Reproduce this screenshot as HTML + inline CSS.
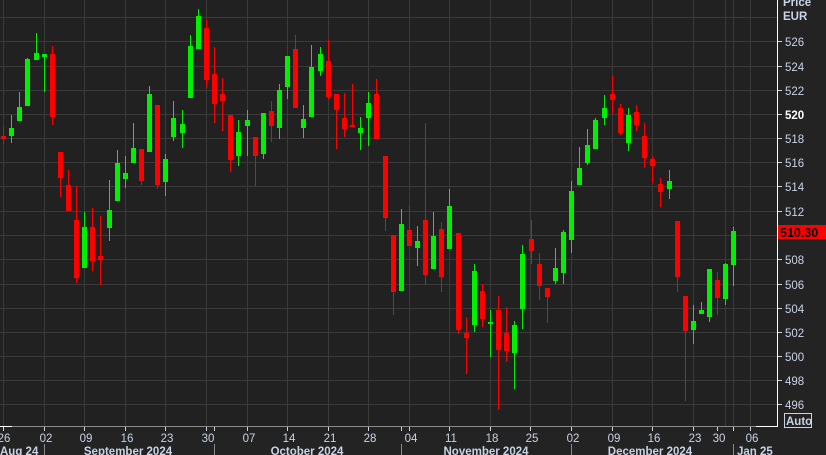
<!DOCTYPE html>
<html><head><meta charset="utf-8"><style>
html,body{margin:0;padding:0;background:#232323;width:826px;height:455px;overflow:hidden}
svg{display:block}
text{font-family:"Liberation Sans",sans-serif;fill:#c9d3e6}
.r{fill:#ff0000}.g{fill:#00f000}
</style></head><body>
<svg width="826" height="455" xmlns="http://www.w3.org/2000/svg">
<rect x="0" y="0" width="826" height="455" fill="#232323"/>
<rect x="0" y="0" width="777" height="426" fill="#212121"/>
<g stroke="#3a3a3a" stroke-width="1">
<line x1="0" y1="17.5" x2="777" y2="17.5"/><line x1="0" y1="41.5" x2="777" y2="41.5"/><line x1="0" y1="66.5" x2="777" y2="66.5"/><line x1="0" y1="90.5" x2="777" y2="90.5"/><line x1="0" y1="114.5" x2="777" y2="114.5"/><line x1="0" y1="138.5" x2="777" y2="138.5"/><line x1="0" y1="162.5" x2="777" y2="162.5"/><line x1="0" y1="186.5" x2="777" y2="186.5"/><line x1="0" y1="211.5" x2="777" y2="211.5"/><line x1="0" y1="235.5" x2="777" y2="235.5"/><line x1="0" y1="259.5" x2="777" y2="259.5"/><line x1="0" y1="284.5" x2="777" y2="284.5"/><line x1="0" y1="308.5" x2="777" y2="308.5"/><line x1="0" y1="332.5" x2="777" y2="332.5"/><line x1="0" y1="356.5" x2="777" y2="356.5"/><line x1="0" y1="380.5" x2="777" y2="380.5"/><line x1="0" y1="404.5" x2="777" y2="404.5"/>
<line x1="3.5" y1="0" x2="3.5" y2="426"/><line x1="44.5" y1="0" x2="44.5" y2="426"/><line x1="84.5" y1="0" x2="84.5" y2="426"/><line x1="125.5" y1="0" x2="125.5" y2="426"/><line x1="165.5" y1="0" x2="165.5" y2="426"/><line x1="206.5" y1="0" x2="206.5" y2="426"/><line x1="247.5" y1="0" x2="247.5" y2="426"/><line x1="287.5" y1="0" x2="287.5" y2="426"/><line x1="328.5" y1="0" x2="328.5" y2="426"/><line x1="368.5" y1="0" x2="368.5" y2="426"/><line x1="409.5" y1="0" x2="409.5" y2="426"/><line x1="449.5" y1="0" x2="449.5" y2="426"/><line x1="490.5" y1="0" x2="490.5" y2="426"/><line x1="530.5" y1="0" x2="530.5" y2="426"/><line x1="571.5" y1="0" x2="571.5" y2="426"/><line x1="612.5" y1="0" x2="612.5" y2="426"/><line x1="652.5" y1="0" x2="652.5" y2="426"/><line x1="693.5" y1="0" x2="693.5" y2="426"/><line x1="725.5" y1="0" x2="725.5" y2="426"/><line x1="733.5" y1="0" x2="733.5" y2="426"/><line x1="750.5" y1="0" x2="750.5" y2="426"/>
</g>
<g class="r"><rect x="3" y="127" width="1" height="17"/><rect x="1" y="136" width="5" height="3"/></g>
<g class="g"><rect x="11" y="115" width="1" height="28"/><rect x="9" y="128" width="5" height="8"/></g>
<g class="g"><rect x="19" y="92" width="1" height="29"/><rect x="17" y="107" width="5" height="14"/></g>
<g class="g"><rect x="27" y="58" width="1" height="48"/><rect x="25" y="59" width="5" height="47"/></g>
<g class="g"><rect x="36" y="33" width="1" height="27"/><rect x="34" y="53" width="5" height="7"/></g>
<g class="g"><rect x="44" y="54" width="1" height="38"/><rect x="42" y="54" width="5" height="3"/></g>
<g class="r"><rect x="52" y="46" width="1" height="79"/><rect x="50" y="54" width="5" height="63"/></g>
<g class="r"><rect x="60" y="152" width="1" height="45"/><rect x="58" y="152" width="5" height="26"/></g>
<g class="r"><rect x="68" y="170" width="1" height="41"/><rect x="66" y="185" width="5" height="26"/></g>
<g class="r"><rect x="76" y="186" width="1" height="97"/><rect x="74" y="220" width="5" height="58"/></g>
<g class="g"><rect x="84" y="212" width="1" height="56"/><rect x="82" y="227" width="5" height="41"/></g>
<g class="r"><rect x="92" y="208" width="1" height="63"/><rect x="90" y="227" width="5" height="34"/></g>
<g class="r"><rect x="100" y="216" width="1" height="69"/><rect x="98" y="256" width="5" height="4"/></g>
<g class="g"><rect x="109" y="180" width="1" height="61"/><rect x="107" y="210" width="5" height="18"/></g>
<g class="g"><rect x="117" y="150" width="1" height="51"/><rect x="115" y="163" width="5" height="38"/></g>
<g class="g"><rect x="125" y="156" width="1" height="32"/><rect x="123" y="173" width="5" height="6"/></g>
<g class="g"><rect x="133" y="123" width="1" height="40"/><rect x="131" y="148" width="5" height="15"/></g>
<g class="r"><rect x="141" y="149" width="1" height="36"/><rect x="139" y="149" width="5" height="32"/></g>
<g class="g"><rect x="149" y="86" width="1" height="66"/><rect x="147" y="94" width="5" height="58"/></g>
<g class="r"><rect x="157" y="105" width="1" height="84"/><rect x="155" y="105" width="5" height="80"/></g>
<g class="g"><rect x="165" y="154" width="1" height="42"/><rect x="163" y="159" width="5" height="23"/></g>
<g class="g"><rect x="173" y="101" width="1" height="40"/><rect x="171" y="118" width="5" height="19"/></g>
<g class="g"><rect x="182" y="110" width="1" height="38"/><rect x="180" y="124" width="5" height="9"/></g>
<g class="g"><rect x="190" y="35" width="1" height="63"/><rect x="188" y="46" width="5" height="52"/></g>
<g class="g"><rect x="198" y="9" width="1" height="40"/><rect x="196" y="16" width="5" height="33"/></g>
<g class="r"><rect x="206" y="20" width="1" height="68"/><rect x="204" y="28" width="5" height="52"/></g>
<g class="r"><rect x="214" y="47" width="1" height="76"/><rect x="212" y="74" width="5" height="30"/></g>
<g class="r"><rect x="222" y="78" width="1" height="53"/><rect x="220" y="94" width="5" height="7"/></g>
<g class="r"><rect x="230" y="115" width="1" height="57"/><rect x="228" y="115" width="5" height="45"/></g>
<g class="g"><rect x="238" y="120" width="1" height="46"/><rect x="236" y="132" width="5" height="24"/></g>
<g class="g"><rect x="247" y="110" width="1" height="46"/><rect x="245" y="120" width="5" height="6"/></g>
<g class="r"><rect x="255" y="137" width="1" height="49"/><rect x="253" y="137" width="5" height="19"/></g>
<g class="g"><rect x="263" y="113" width="1" height="46"/><rect x="261" y="113" width="5" height="41"/></g>
<g class="r"><rect x="271" y="101" width="1" height="41"/><rect x="269" y="111" width="5" height="15"/></g>
<g class="g"><rect x="279" y="84" width="1" height="55"/><rect x="277" y="90" width="5" height="38"/></g>
<g class="g"><rect x="287" y="56" width="1" height="43"/><rect x="285" y="56" width="5" height="31"/></g>
<g class="r"><rect x="295" y="35" width="1" height="73"/><rect x="293" y="49" width="5" height="59"/></g>
<g class="g"><rect x="303" y="105" width="1" height="33"/><rect x="301" y="119" width="5" height="9"/></g>
<g class="g"><rect x="311" y="45" width="1" height="72"/><rect x="309" y="67" width="5" height="50"/></g>
<g class="g"><rect x="320" y="47" width="1" height="29"/><rect x="318" y="54" width="5" height="17"/></g>
<g class="r"><rect x="328" y="40" width="1" height="59"/><rect x="326" y="61" width="5" height="36"/></g>
<g class="r"><rect x="336" y="94" width="1" height="55"/><rect x="334" y="94" width="5" height="16"/></g>
<g class="r"><rect x="344" y="93" width="1" height="44"/><rect x="342" y="118" width="5" height="11"/></g>
<g class="r"><rect x="352" y="84" width="1" height="43"/><rect x="350" y="125" width="5" height="2"/></g>
<g class="g"><rect x="360" y="117" width="1" height="33"/><rect x="358" y="128" width="5" height="5"/></g>
<g class="g"><rect x="368" y="92" width="1" height="54"/><rect x="366" y="103" width="5" height="15"/></g>
<g class="r"><rect x="376" y="79" width="1" height="60"/><rect x="374" y="94" width="5" height="45"/></g>
<g class="r"><rect x="385" y="156" width="1" height="75"/><rect x="383" y="156" width="5" height="62"/></g>
<g class="r"><rect x="393" y="235" width="1" height="80"/><rect x="391" y="235" width="5" height="57"/></g>
<g class="g"><rect x="401" y="209" width="1" height="82"/><rect x="399" y="224" width="5" height="67"/></g>
<g class="r"><rect x="409" y="206" width="1" height="40"/><rect x="407" y="230" width="5" height="16"/></g>
<g class="g"><rect x="417" y="226" width="1" height="40"/><rect x="415" y="241" width="5" height="7"/></g>
<g class="r"><rect x="425" y="123" width="1" height="162"/><rect x="423" y="220" width="5" height="55"/></g>
<g class="g"><rect x="433" y="212" width="1" height="57"/><rect x="431" y="236" width="5" height="33"/></g>
<g class="r"><rect x="441" y="222" width="1" height="70"/><rect x="439" y="229" width="5" height="48"/></g>
<g class="g"><rect x="449" y="189" width="1" height="60"/><rect x="447" y="206" width="5" height="43"/></g>
<g class="r"><rect x="458" y="233" width="1" height="101"/><rect x="456" y="233" width="5" height="97"/></g>
<g class="r"><rect x="466" y="317" width="1" height="57"/><rect x="464" y="333" width="5" height="5"/></g>
<g class="g"><rect x="474" y="264" width="1" height="68"/><rect x="472" y="271" width="5" height="54"/></g>
<g class="r"><rect x="482" y="284" width="1" height="43"/><rect x="480" y="291" width="5" height="28"/></g>
<g class="g"><rect x="490" y="310" width="1" height="47"/><rect x="488" y="322" width="5" height="2"/></g>
<g class="r"><rect x="498" y="296" width="1" height="114"/><rect x="496" y="310" width="5" height="40"/></g>
<g class="r"><rect x="506" y="307" width="1" height="55"/><rect x="504" y="333" width="5" height="18"/></g>
<g class="g"><rect x="514" y="321" width="1" height="68"/><rect x="512" y="325" width="5" height="28"/></g>
<g class="g"><rect x="522" y="245" width="1" height="84"/><rect x="520" y="254" width="5" height="55"/></g>
<g class="r"><rect x="531" y="220" width="1" height="44"/><rect x="529" y="239" width="5" height="12"/></g>
<g class="r"><rect x="539" y="253" width="1" height="47"/><rect x="537" y="264" width="5" height="22"/></g>
<g class="r"><rect x="547" y="288" width="1" height="35"/><rect x="545" y="288" width="5" height="9"/></g>
<g class="g"><rect x="555" y="248" width="1" height="36"/><rect x="553" y="268" width="5" height="13"/></g>
<g class="g"><rect x="563" y="230" width="1" height="54"/><rect x="561" y="232" width="5" height="41"/></g>
<g class="g"><rect x="571" y="181" width="1" height="72"/><rect x="569" y="191" width="5" height="49"/></g>
<g class="g"><rect x="579" y="147" width="1" height="38"/><rect x="577" y="168" width="5" height="17"/></g>
<g class="g"><rect x="587" y="129" width="1" height="36"/><rect x="585" y="145" width="5" height="18"/></g>
<g class="g"><rect x="595" y="118" width="1" height="31"/><rect x="593" y="120" width="5" height="29"/></g>
<g class="g"><rect x="604" y="95" width="1" height="30"/><rect x="602" y="108" width="5" height="10"/></g>
<g class="r"><rect x="612" y="76" width="1" height="38"/><rect x="610" y="94" width="5" height="6"/></g>
<g class="r"><rect x="620" y="104" width="1" height="31"/><rect x="618" y="108" width="5" height="25"/></g>
<g class="g"><rect x="628" y="108" width="1" height="43"/><rect x="626" y="115" width="5" height="28"/></g>
<g class="r"><rect x="636" y="105" width="1" height="26"/><rect x="634" y="112" width="5" height="13"/></g>
<g class="r"><rect x="644" y="123" width="1" height="45"/><rect x="642" y="136" width="5" height="22"/></g>
<g class="r"><rect x="652" y="156" width="1" height="27"/><rect x="650" y="159" width="5" height="7"/></g>
<g class="r"><rect x="660" y="178" width="1" height="29"/><rect x="658" y="184" width="5" height="8"/></g>
<g class="g"><rect x="669" y="170" width="1" height="29"/><rect x="667" y="181" width="5" height="8"/></g>
<g class="r"><rect x="677" y="221" width="1" height="71"/><rect x="675" y="221" width="5" height="56"/></g>
<g class="r"><rect x="685" y="296" width="1" height="105"/><rect x="683" y="296" width="5" height="35"/></g>
<g class="g"><rect x="693" y="305" width="1" height="39"/><rect x="691" y="321" width="5" height="9"/></g>
<g class="g"><rect x="701" y="302" width="1" height="12"/><rect x="699" y="310" width="5" height="4"/></g>
<g class="g"><rect x="709" y="269" width="1" height="53"/><rect x="707" y="269" width="5" height="48"/></g>
<g class="r"><rect x="717" y="272" width="1" height="43"/><rect x="715" y="280" width="5" height="18"/></g>
<g class="g"><rect x="725" y="263" width="1" height="42"/><rect x="723" y="264" width="5" height="35"/></g>
<g class="g"><rect x="733" y="227" width="1" height="59"/><rect x="731" y="231" width="5" height="34"/></g>
<!-- axes -->
<rect x="0" y="426" width="777" height="1" fill="#8a8a8a"/>
<rect x="0" y="426" width="12" height="1" fill="#ffffff"/>
<rect x="756" y="426" width="22" height="1" fill="#ffffff"/>
<rect x="777" y="0" width="1" height="427" fill="#ffffff"/>
<g fill="#c9d3e6">
<rect x="778" y="41" width="4" height="1"/><rect x="778" y="66" width="4" height="1"/><rect x="778" y="90" width="4" height="1"/><rect x="778" y="114" width="4" height="1"/><rect x="778" y="138" width="4" height="1"/><rect x="778" y="162" width="4" height="1"/><rect x="778" y="186" width="4" height="1"/><rect x="778" y="211" width="4" height="1"/><rect x="778" y="259" width="4" height="1"/><rect x="778" y="284" width="4" height="1"/><rect x="778" y="308" width="4" height="1"/><rect x="778" y="332" width="4" height="1"/><rect x="778" y="356" width="4" height="1"/><rect x="778" y="380" width="4" height="1"/><rect x="778" y="404" width="4" height="1"/>
</g>
<g font-size="11.5">
<text x="783" y="6" font-weight="bold">Price</text>
<text x="783" y="20" font-weight="bold">EUR</text>
<text x="785" y="46">526</text><text x="785" y="71">524</text><text x="785" y="95">522</text>
<text x="785" y="119" font-weight="bold" fill="#ffffff" style="fill:#ffffff">520</text>
<text x="785" y="143">518</text><text x="785" y="167">516</text><text x="785" y="191">514</text><text x="785" y="216">512</text>
<text x="785" y="264">508</text><text x="785" y="289">506</text><text x="785" y="313">504</text><text x="785" y="337">502</text><text x="785" y="361">500</text><text x="785" y="385">498</text><text x="785" y="409">496</text>
</g>
<rect x="778" y="225" width="48" height="14" fill="#ff0000"/>
<text x="780" y="237" font-size="12.5" font-weight="bold" style="fill:#000">510.30</text>
<rect x="784.5" y="413.5" width="27" height="14" fill="none" stroke="#c9d3e6"/>
<text x="786" y="425" font-size="11.5" font-weight="bold">Auto</text>
<!-- date ticks -->
<g fill="#c9d3e6">
<rect x="3" y="427" width="1" height="4"/><rect x="44" y="427" width="1" height="4"/><rect x="84" y="427" width="1" height="4"/><rect x="125" y="427" width="1" height="4"/><rect x="165" y="427" width="1" height="4"/><rect x="206" y="427" width="1" height="4"/><rect x="214" y="427" width="1" height="4"/><rect x="247" y="427" width="1" height="4"/><rect x="287" y="427" width="1" height="4"/><rect x="328" y="427" width="1" height="4"/><rect x="368" y="427" width="1" height="4"/><rect x="401" y="427" width="1" height="4"/><rect x="409" y="427" width="1" height="4"/><rect x="449" y="427" width="1" height="4"/><rect x="490" y="427" width="1" height="4"/><rect x="530" y="427" width="1" height="4"/><rect x="571" y="427" width="1" height="4"/><rect x="612" y="427" width="1" height="4"/><rect x="652" y="427" width="1" height="4"/><rect x="693" y="427" width="1" height="4"/><rect x="717" y="427" width="1" height="4"/><rect x="733" y="427" width="1" height="4"/><rect x="750" y="427" width="1" height="4"/>
</g>
<g font-size="11.5" text-anchor="middle">
<text x="4" y="442">26</text><text x="46" y="442">02</text><text x="86" y="442">09</text><text x="127" y="442">16</text><text x="167" y="442">23</text><text x="208" y="442">30</text><text x="249" y="442">07</text><text x="289" y="442">14</text><text x="330" y="442">21</text><text x="370" y="442">28</text><text x="411" y="442">04</text><text x="451" y="442">11</text><text x="492" y="442">18</text><text x="532" y="442">25</text><text x="573" y="442">02</text><text x="614" y="442">09</text><text x="654" y="442">16</text><text x="695" y="442">23</text><text x="719" y="442">30</text><text x="752" y="442">06</text>
</g>
<g fill="#8a8a8a">
<rect x="44" y="444" width="1" height="11"/><rect x="214" y="444" width="1" height="11"/><rect x="401" y="444" width="1" height="11"/><rect x="571" y="444" width="1" height="11"/><rect x="733" y="444" width="1" height="11"/>
</g>
<g font-size="11.5" font-weight="bold">
<text x="0" y="455">Aug 24</text>
<text x="128" y="455" text-anchor="middle">September 2024</text>
<text x="307" y="455" text-anchor="middle">October 2024</text>
<text x="486" y="455" text-anchor="middle">November 2024</text>
<text x="650" y="455" text-anchor="middle">December 2024</text>
<text x="737" y="455">Jan 25</text>
</g>
</svg>
</body></html>
